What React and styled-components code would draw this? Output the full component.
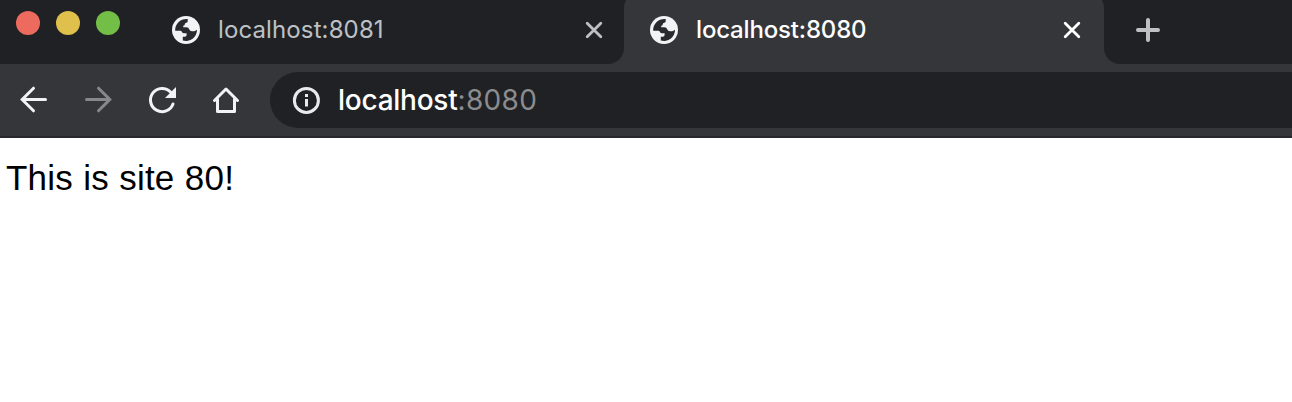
import React from "react";
import styled, { createGlobalStyle } from "styled-components";

const GlobalStyle = createGlobalStyle`
  * { box-sizing: border-box; }
  body { margin: 0; background: #fff; overflow: hidden; }
`;

const Browser = styled.div`
  display: flex;
  flex-direction: column;
  height: 402px;
  background: #fff;
  font-family: Inter, Roboto, sans-serif;
  overflow: hidden;
`;

const TabStrip = styled.div`
  display: flex;
  flex: 0 0 64px;
  background: #202124;
`;

const WindowControls = styled.div`
  display: flex;
  gap: 16px;
  padding: 11px 0 0 16px;
  width: 146px;
`;

const Light = styled.span`
  width: 24px;
  height: 24px;
  border-radius: 50%;
  background: ${(p) => p.$color};
`;

const Tab = styled.div`
  position: relative;
  display: flex;
  align-items: center;
  width: ${(p) => (p.$active ? 480 : 478)}px;
  height: 64px;
  padding: 0 ${(p) => (p.$active ? 20 : 18)}px 4px 26px;
  border-radius: 16px 16px 0 0;
  color: ${(p) => (p.$active ? "#fff" : "#bdc1c6")};
  background: ${(p) => (p.$active ? "#35363a" : "transparent")};
  ${(p) =>
    p.$active &&
    `
    height: 72px;
    margin-top: -8px;
    padding-top: 8px;
    &::before, &::after {
      content: "";
      position: absolute;
      bottom: 0;
      width: 16px;
      height: 16px;
    }
    &::before {
      left: -16px;
      background: radial-gradient(circle at 0 0, transparent 15.5px, #35363a 16.5px);
    }
    &::after {
      right: -16px;
      background: radial-gradient(circle at 100% 0, transparent 15.5px, #35363a 16.5px);
    }
  `}
`;

const TabTitle = styled.span`
  flex: 1;
  margin-left: 18px;
  font-size: 24px;
  font-weight: ${(p) => (p.$active ? 500 : 400)};
  letter-spacing: ${(p) => (p.$active ? -0.17 : 0.12)}px;
  line-height: 30px;
  white-space: nowrap;
`;

const Icon = styled.svg`
  display: block;
  flex: none;
  width: ${(p) => p.$size}px;
  height: ${(p) => p.$size}px;
  color: ${(p) => p.$color || "currentColor"};
  fill: none;
  stroke: currentColor;
  stroke-width: 3;
  stroke-linecap: round;
`;

const NewTab = styled.div`
  display: flex;
  align-items: center;
  padding: 0 0 4px 32px;
`;

const Toolbar = styled.div`
  display: flex;
  align-items: center;
  flex: 0 0 74px;
  padding-left: 18px;
  background: #35363a;
  border-bottom: 2px solid #28292c;
`;

const NavButtons = styled.div`
  display: flex;
  gap: 32px;
  width: 252px;
`;

const AddressBar = styled.div`
  display: flex;
  align-items: center;
  flex: 1;
  height: 56px;
  padding-left: 20px;
  border-radius: 28px 0 0 28px;
  background: #202124;
`;

const Address = styled.span`
  margin-left: 16px;
  font-size: 28px;
  font-weight: 500;
  line-height: 34px;
  letter-spacing: -0.25px;
  color: #fff;
`;

const Port = styled.span`
  font-weight: 400;
  letter-spacing: 0.35px;
  color: #8b8c8e;
`;

const Page = styled.main`
  padding: 18px 6px;
  font-family: "Liberation Sans", Arial, sans-serif;
  font-size: 35px;
  line-height: 44px;
  letter-spacing: 0.2px;
  word-spacing: 0.4px;
  color: #000;
`;

const Globe = () => (
  <Icon viewBox="0 0 28 28" $size={28} $color="#f1f3f4">
    <circle cx="14" cy="14" r="14" fill="currentColor" stroke="none" />
    <path
      d="M3.2 14.8A11 11 0 0 1 15.7 3V5.2Q15.7 6.6 14.3 6.8Q12.7 7 12.7 8.6Q12.7 9.8 11.2 9.8V11.2H14.5Q16.6 11.2 17.2 13.2Q17.8 15.2 20 15.2H22.2Q23.3 15.2 25 13.8A11 11 0 0 1 10.8 24.5V20.8H12.8Q14.6 20.8 14.6 19V17.2H11.7Q10.2 17.2 9.8 15.8Q9.5 14.8 8.4 14.8Z"
      fill="#292a2d"
      stroke="none"
    />
  </Icon>
);

const Close = () => (
  <Icon viewBox="0 0 24 24" $size={24}>
    <path d="M5.2 5.2 18.8 18.8M18.8 5.2 5.2 18.8" strokeWidth="2.8" />
  </Icon>
);

const tabs = [
  { title: "localhost:8081", active: false },
  { title: "localhost:8080", active: true },
];

export default function App() {
  return (
    <Browser>
      <GlobalStyle />
      <TabStrip>
        <WindowControls>
          <Light $color="#ed6a5e" />
          <Light $color="#e0c04c" />
          <Light $color="#72be47" />
        </WindowControls>
        {tabs.map((tab) => (
          <Tab key={tab.title} $active={tab.active}>
            <Globe />
            <TabTitle $active={tab.active}>{tab.title}</TabTitle>
            <Close />
          </Tab>
        ))}
        <NewTab>
          <Icon viewBox="0 0 24 24" $size={24} $color="#bdc1c6">
            <path d="M12 2V22M2 12H22" strokeWidth="4" />
          </Icon>
        </NewTab>
      </TabStrip>
      <Toolbar>
        <NavButtons>
          <Icon viewBox="0 0 32 32" $size={32} $color="#f1f3f4">
            <path d="M27.5 15.5H5M15.5 4.2 4.2 15.5l11.3 11.3" />
          </Icon>
          <Icon viewBox="0 0 32 32" $size={32} $color="#87888a">
            <path d="M4.5 15.5H27M16.5 4.2 27.8 15.5 16.5 26.8" />
          </Icon>
          <Icon viewBox="0 0 32 32" $size={32} $color="#f1f3f4">
            <path d="M24.5 8A11.6 11.6 0 1 0 27 20" />
            <path d="M30 3V14H19Z" fill="currentColor" stroke="none" />
          </Icon>
          <Icon viewBox="0 0 32 32" $size={32} $color="#f1f3f4">
            <path d="M4.5 16.5 16 5 27.5 16.5M7.5 15V27.5H24.5V15" strokeLinejoin="round" />
          </Icon>
        </NavButtons>
        <AddressBar>
          <Icon viewBox="0 0 32 32" $size={32} $color="#e8eaed">
            <circle cx="16.4" cy="16.4" r="12" />
            <path d="M16.5 15V22.5M16.5 10V13" strokeLinecap="butt" />
          </Icon>
          <Address>
            localhost<Port>:8080</Port>
          </Address>
        </AddressBar>
      </Toolbar>
      <Page>This is site 80!</Page>
    </Browser>
  );
}
